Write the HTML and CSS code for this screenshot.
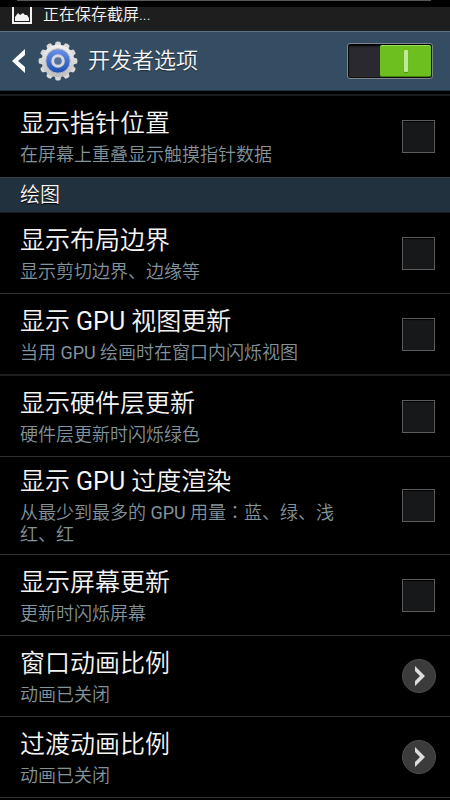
FILE: index.html
```html
<!DOCTYPE html>
<html lang="zh-CN">
<head>
<meta charset="utf-8">
<meta name="viewport" content="width=device-width, initial-scale=1">
<title>开发者选项</title>
<link rel="stylesheet" href="styles.css">
</head>
<body>
<div class="top-edge"></div>
<div class="status">
  <svg class="status-icon" width="20" height="18" viewBox="0 0 20 18" aria-hidden="true">
    <path d="M1 0V16H19V0" fill="none" stroke="#f2f2f2" stroke-width="2"/>
    <path d="M3 14V10L6 6L8 8L11 6L13 8L15 8L17 11V14Z" fill="#f2f2f2"/>
  </svg>
  <span>正在保存截屏...</span>
</div>
<header class="appbar">
  <button class="back" aria-label="返回">
    <svg width="14" height="26" viewBox="0 0 14 26"><path d="M13 1V7L6 13L13 19V25L0 13Z" fill="#fff"/></svg>
  </button>
  <svg class="gear" width="40" height="40" viewBox="-20 -20 40 40" aria-hidden="true">
    <defs>
      <linearGradient id="metal" x1="0" y1="0" x2="0" y2="1"><stop offset="0" stop-color="#f1f1f1"/><stop offset="1" stop-color="#bdbdbd"/></linearGradient>
      <linearGradient id="blue" x1="0" y1="0" x2="0" y2="1"><stop offset="0" stop-color="#6c92ec"/><stop offset="1" stop-color="#1c4eb0"/></linearGradient>
      <path id="tooth" d="M-3.4 -15L-2.4 -19Q0 -20 2.4 -19L3.4 -15Z"/>
    </defs>
    <g fill="#d9d9d9">
      <use href="#tooth"/><use href="#tooth" transform="rotate(30)"/><use href="#tooth" transform="rotate(60)"/><use href="#tooth" transform="rotate(90)"/><use href="#tooth" transform="rotate(120)"/><use href="#tooth" transform="rotate(150)"/><use href="#tooth" transform="rotate(180)"/><use href="#tooth" transform="rotate(210)"/><use href="#tooth" transform="rotate(240)"/><use href="#tooth" transform="rotate(270)"/><use href="#tooth" transform="rotate(300)"/><use href="#tooth" transform="rotate(330)"/>
    </g>
    <circle r="16.3" fill="url(#metal)"/>
    <circle r="12.2" fill="url(#blue)" stroke="#b5b9c0" stroke-width="1"/>
    <circle r="5.3" fill="#5470a3" stroke="#d6d6d6" stroke-width="3"/>
  </svg>
  <h1>开发者选项</h1>
  <label class="switch"><input type="checkbox" role="switch" aria-label="开发者选项" checked><span class="thumb"></span></label>
</header>
<main>
  <label class="row first"><span class="text"><span class="title">显示指针位置</span><span class="sub">在屏幕上重叠显示触摸指针数据</span></span><input class="check" type="checkbox"></label>
  <h2>绘图</h2>
  <label class="row"><span class="text"><span class="title">显示布局边界</span><span class="sub">显示剪切边界、边缘等</span></span><input class="check" type="checkbox"></label>
  <label class="row thick"><span class="text"><span class="title">显示 <span class="latin">GPU</span> 视图更新</span><span class="sub">当用 <span class="latin">GPU</span> 绘画时在窗口内闪烁视图</span></span><input class="check" type="checkbox"></label>
  <label class="row"><span class="text"><span class="title">显示硬件层更新</span><span class="sub">硬件层更新时闪烁绿色</span></span><input class="check" type="checkbox"></label>
  <label class="row"><span class="text"><span class="title">显示 <span class="latin">GPU</span> 过度渲染</span><span class="sub">从最少到最多的 <span class="latin">GPU</span> 用量<span class="colon" lang="zh-TW">：</span>蓝、绿、浅红、红</span></span><input class="check" type="checkbox"></label>
  <label class="row"><span class="text"><span class="title">显示屏幕更新</span><span class="sub">更新时闪烁屏幕</span></span><input class="check" type="checkbox"></label>
  <button class="row"><span class="text"><span class="title">窗口动画比例</span><span class="sub">动画已关闭</span></span><svg class="more" width="34" height="34" viewBox="0 0 34 34" aria-hidden="true"><circle cx="17" cy="17" r="16.5" fill="#3b3b3b" stroke="#4c4c4c"/><path d="M13 7L23 17L13 27V22L18 17L13 12Z" fill="#ddd"/></svg></button>
  <button class="row"><span class="text"><span class="title">过渡动画比例</span><span class="sub">动画已关闭</span></span><svg class="more" width="34" height="34" viewBox="0 0 34 34" aria-hidden="true"><circle cx="17" cy="17" r="16.5" fill="#3b3b3b" stroke="#4c4c4c"/><path d="M13 7L23 17L13 27V22L18 17L13 12Z" fill="#ddd"/></svg></button>
</main>
</body>
</html>
```
FILE: styles.css
```css
* { box-sizing: border-box; }

body {
  margin: 0;
  background: #000;
  color: #f5f5f5;
  font-family: Roboto, "Noto Sans CJK SC", sans-serif;
  font-weight: 350;
}

button {
  margin: 0;
  padding: 0;
  border: 0;
  background: none;
  color: inherit;
  font: inherit;
  text-align: left;
}

.top-edge {
  height: 7px;
  margin: 0 19px 0 17px;
  border-top: 1px solid #5a5a5a;
}

.status {
  display: flex;
  align-items: flex-start;
  gap: 11px;
  height: 24px;
  padding-left: 12px;
  background: #1e1e1e;
  font-size: 16px;
  line-height: 16px;
}

.appbar {
  display: flex;
  align-items: center;
  height: 60px;
  padding: 0 17px 0 12px;
  background: #354d63;
  border-top: 1px solid #5b7384;
  border-bottom: 1px solid #1f3544;
}

.back { height: 26px; }
.back svg { display: block; }
.gear { margin-left: 12px; }

h1 {
  flex: 1;
  margin: 0 0 0 10px;
  font-size: 22px;
  line-height: 32px;
  font-weight: inherit;
  text-shadow: 0 1px 1px #1a2833;
}

.switch {
  position: relative;
  width: 86px;
  height: 36px;
  padding: 1px;
  border: 1px solid #7d868c;
  border-radius: 3px;
  background: #29292f;
  box-shadow: inset 0 2px 2px #000, inset 0 0 0 1px #111;
}

.switch input {
  position: absolute;
  inset: 0;
  width: 100%;
  height: 100%;
  margin: 0;
  opacity: 0;
}

.thumb {
  display: flex;
  align-items: center;
  justify-content: center;
  width: 51px;
  height: 32px;
  margin-left: auto;
  border-radius: 2px;
  background: #6dbf1f;
  border-top: 1px solid #9be05c;
  border-bottom: 1px solid #438208;
}

.thumb::before {
  content: "";
  width: 4px;
  height: 22px;
  border-radius: 1px;
  background: #bfe89a;
  box-shadow: 0 1px 1px #4b8d12;
}

.row {
  display: flex;
  align-items: center;
  justify-content: space-between;
  width: 100%;
  min-height: 81px;
  padding: 8px 14px 8px 20px;
  border-bottom: 1px solid #303030;
}

.thick {
  min-height: 82px;
  border-bottom: 2px solid #1e1e1e;
}

.first {
  margin-top: 3px;
  border-top: 2px solid #191b1c;
  border-bottom: 0;
  min-height: 83px;
}

.text { width: 320px; }
.title, .sub { display: block; }
.latin { font-weight: 400; }

.colon {
  font-family: "Noto Sans CJK TC", sans-serif;
  line-height: 1;
}

.title {
  font-size: 25px;
  line-height: 34px;
}

.sub {
  margin-top: 3px;
  color: #82939b;
  font-size: 18px;
  line-height: 22px;
}

h2 {
  margin: 0;
  padding: 1px 20px 0;
  background: #22313e;
  border-top: 1px solid #34424d;
  border-bottom: 1px solid #151c22;
  font-size: 20px;
  line-height: 33px;
  font-weight: inherit;
  text-shadow: 0 1px 1px #000;
}

.check {
  appearance: none;
  width: 33px;
  height: 33px;
  margin: 0 1px 0 0;
  border: 1px solid #5c5c5c;
  background: #17181a;
  box-shadow: inset 0 1px 1px #000;
}

.more { display: block; }
```
